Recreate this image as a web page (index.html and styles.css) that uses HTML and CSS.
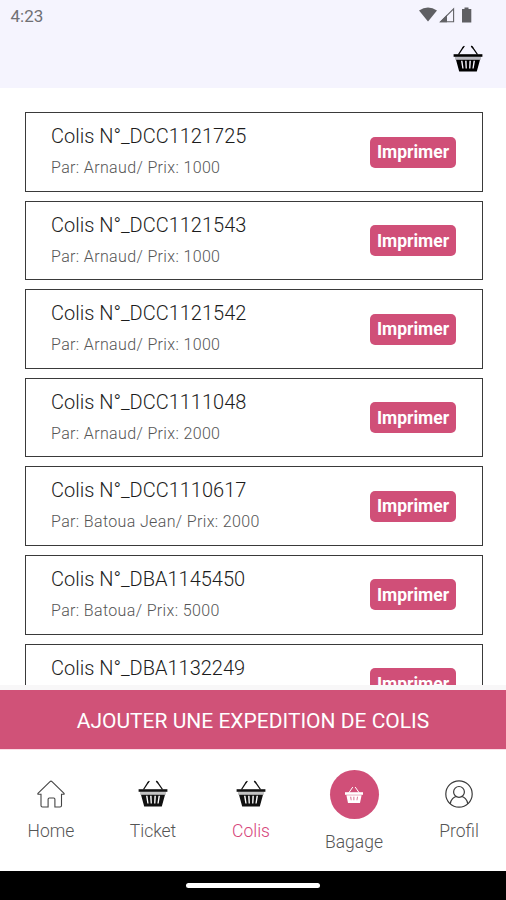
FILE: index.html
```html
<!DOCTYPE html>
<html lang="fr">
<head>
  <title>Colis</title>
  <meta charset="UTF-8">
  <link rel="stylesheet" href="styles.css">
</head>

<body>
  <!-- shared basket icon -->
  <svg width="0" height="0" class="defs">
    <symbol id="basket" viewBox="0 0 30 28">
      <path d="M5.5 9.5 L10.6 1.6 M24.5 9.5 L19 1.6" fill="none" stroke="currentColor" stroke-width="1.3"/>
      <path d="M9.8 3 L11.4 1 M20 3 L18.2 1" stroke="currentColor" stroke-width="1.2"/>
      <path d="M.6 9.2 h28.8 v2.6 H.6 z" fill="currentColor"/>
      <path d="M2 11.8 h26 v3 H2 z" fill="currentColor" opacity=".25"/>
      <path fill-rule="evenodd" fill="currentColor" d="M3 14.8 H27 L23.8 26.4 H6.2 Z M8 15.7 L9.3 23.5 H10.6 L9.5 15.7 Z M12.1 15.7 L12.6 23.5 H13.9 L13.6 15.7 Z M16.4 15.7 L16.1 23.5 H17.4 L17.9 15.7 Z M20.5 15.7 L19.4 23.5 H20.7 L22 15.7 Z"/>
    </symbol>
  </svg>

  <div class="screen">
    <header>
      <div class="status">
        <span class="clock">4:23</span>
        <svg class="statusIcons" width="54" height="16" viewBox="0 0 54 16">
          <path d="M0 3.6 Q9 -2.8 18 3.6 L9 14.6 Z" fill="#5f5f63"/>
          <path d="M21.5 14.8 L34.6 1.8 V14.8 Z" fill="none" stroke="#626266" stroke-width="1.1"/>
          <path d="M20.5 15.2 L28 7.8 V15.2 Z" fill="#626266"/>
          <path d="M45.5 .5 h4 v1.5 h2.8 v13.6 h-9.3 V2 h2.5 z" fill="#5f5f63"/>
        </svg>
      </div>
      <svg class="cart"><use href="#basket"/></svg>
    </header>

    <main class="list">
      <div class="card">
        <div>
          <div class="name">Colis N°_DCC1121725</div>
          <div class="info">Par: Arnaud/ Prix: 1000</div>
        </div>
        <button>Imprimer</button>
      </div>
      <div class="card">
        <div>
          <div class="name">Colis N°_DCC1121543</div>
          <div class="info">Par: Arnaud/ Prix: 1000</div>
        </div>
        <button>Imprimer</button>
      </div>
      <div class="card">
        <div>
          <div class="name">Colis N°_DCC1121542</div>
          <div class="info">Par: Arnaud/ Prix: 1000</div>
        </div>
        <button>Imprimer</button>
      </div>
      <div class="card">
        <div>
          <div class="name">Colis N°_DCC1111048</div>
          <div class="info">Par: Arnaud/ Prix: 2000</div>
        </div>
        <button>Imprimer</button>
      </div>
      <div class="card">
        <div>
          <div class="name">Colis N°_DCC1110617</div>
          <div class="info">Par: Batoua Jean/ Prix: 2000</div>
        </div>
        <button>Imprimer</button>
      </div>
      <div class="card">
        <div>
          <div class="name">Colis N°_DBA1145450</div>
          <div class="info">Par: Batoua/ Prix: 5000</div>
        </div>
        <button>Imprimer</button>
      </div>
      <div class="card">
        <div>
          <div class="name">Colis N°_DBA1132249</div>
        </div>
        <button>Imprimer</button>
      </div>
    </main>

    <div class="add">AJOUTER UNE EXPEDITION DE COLIS</div>

    <nav>
      <a class="tab">
        <svg class="icon" viewBox="0 0 30 28">
          <path d="M5 14.3 H2.6 Q1.2 14.3 2.2 13.2 L14 1.6 Q15 .7 16 1.6 L27.8 13.2 Q28.8 14.3 27.4 14.3 H25.5 V25.5 Q25.5 27 24 27 H18.9 V19.2 Q18.9 18 17.7 18 H13.3 Q12.1 18 12.1 19.2 V27 H6.5 Q5 27 5 25.5 Z" fill="none" stroke="#444" stroke-width="1.1"/>
        </svg>
        <span>Home</span>
      </a>
      <a class="tab">
        <svg class="icon"><use href="#basket"/></svg>
        <span>Ticket</span>
      </a>
      <a class="tab active">
        <svg class="icon"><use href="#basket"/></svg>
        <span>Colis</span>
      </a>
      <a class="tab">
        <div class="circle">
          <svg viewBox="0 0 18 18">
            <path d="M3.8 6.8 L7.8 1 M14.2 6.8 L10.2 1" fill="none" stroke="#fff" stroke-width="1"/>
            <path d="M0 6.2 h18 v2.6 H0 z" fill="#fff"/>
            <path fill-rule="evenodd" fill="#fff" d="M1.4 9.2 H16.6 L15 17 H3 Z M5.3 10.8 L5.8 14.3 H6.5 L6.2 10.8 Z M8.5 10.8 V14.3 H9.3 V10.8 Z M12 10.8 L11.6 14.3 H12.3 L12.8 10.8 Z"/>
          </svg>
        </div>
        <span>Bagage</span>
      </a>
      <a class="tab">
        <svg class="icon" viewBox="0 0 30 28">
          <g fill="none" stroke="#3c3c3c" stroke-width="1.2">
            <circle cx="15" cy="14" r="13.2"/>
            <circle cx="15" cy="11.9" r="5.4"/>
            <path d="M6.2 23.8 C6.8 19.5 10 16.9 12.2 16.5 M23.8 23.8 C23.2 19.5 20 16.9 17.8 16.5"/>
          </g>
        </svg>
        <span>Profil</span>
      </a>
    </nav>

    <footer><div class="handle"></div></footer>
  </div>
</body>
</html>
```
FILE: styles.css
```css
body {
  margin: 0;
  background: #fff;
  font-family: Roboto, "Liberation Sans", sans-serif;
}
.defs {
  display: block;
}
.screen {
  width: 506px;
  height: 900px;
  display: flex;
  flex-direction: column;
  overflow: hidden;
}
header {
  height: 88px;
  flex: none;
  background: #f5f4fe;
}
.status {
  display: flex;
  justify-content: space-between;
  align-items: flex-start;
  padding: 7px 33px 0 10.5px;
  height: 25px;
}
.clock {
  font-size: 17px;
  line-height: 19px;
  color: #707074;
}
.cart {
  display: block;
  width: 30px;
  height: 28px;
  margin: 13px 23px 0 auto;
}
.list {
  height: 573px;
  flex: none;
  box-sizing: border-box;
  padding: 0 23px 0 25px;
  margin-top: 24px;
  overflow: hidden;
}
.card {
  display: flex;
  justify-content: space-between;
  align-items: flex-start;
  box-sizing: border-box;
  height: 79.6px;
  margin-bottom: 9px;
  padding: 0 26px 0 25px;
  border: 1px solid #3a3a3a;
}
.name {
  margin-top: 11px;
  font-size: 20px;
  line-height: 24px;
  color: #1c1c1c;
  font-weight: 300;
}
.info {
  margin-top: 10px;
  font-size: 16px;
  line-height: 19px;
  letter-spacing: 0.36px;
  font-weight: 300;
  color: #555;
}
.card button {
  width: 86px;
  height: 31px;
  margin: 23.5px 0 0;
  padding: 0;
  border: 0;
  border-radius: 5px;
  background: #d04f78;
  color: #fff;
  font: bold 17.5px Roboto, sans-serif;
}
.add {
  flex: none;
  height: 59px;
  border-top: 5px solid #f8f7f8;
  background: #d05278;
  color: #fff;
  font-size: 21px;
  line-height: 62px;
  text-align: center;
}
nav {
  display: grid;
  grid-template-columns: 102px 102px 94px 112px 96px;
  flex: none;
  height: 122px;
  border-top: 1px solid #fbdde6;
  box-sizing: border-box;
}
.tab {
  display: flex;
  flex-direction: column;
  align-items: center;
  color: #555;
  font-size: 17.5px;
  line-height: 22px;
  font-weight: 300;
}
.tab:last-child {
  padding-left: 2px;
}
.icon {
  width: 30px;
  height: 28px;
  margin: 30px 0 12px;
  color: #111;
}
.active span {
  color: #d6457a;
}
.circle {
  display: flex;
  justify-content: center;
  align-items: center;
  width: 49px;
  height: 49px;
  margin: 20px 0 12px;
  border-radius: 50%;
  background: #d04f78;
}
.circle svg {
  width: 18px;
  height: 18px;
}
footer {
  flex: 1;
  background: #000;
}
.handle {
  width: 134px;
  height: 5px;
  margin: 12px auto 0;
  border-radius: 3px;
  background: #fff;
}
```
